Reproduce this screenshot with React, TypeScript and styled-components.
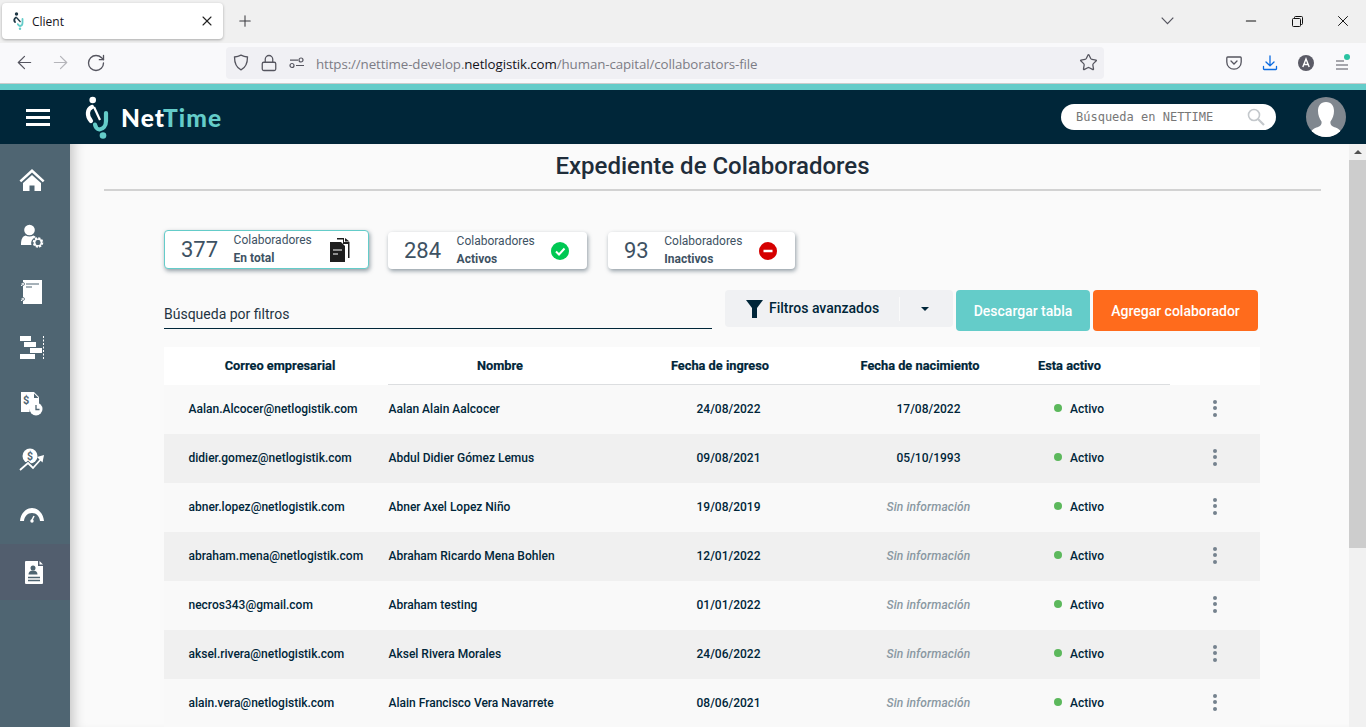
import React from "react";
import styled, { createGlobalStyle } from "styled-components";
import { ArrowLeft, ArrowRight, RotateCw, Lock, Star, X, Plus, Minus } from "lucide-react";

const Global = createGlobalStyle`
  html, body { margin: 0; padding: 0; height: 100%; overflow: hidden; background: #fafafa; }
  * { box-sizing: border-box; }
  body { font-family: "Roboto", "Liberation Sans", sans-serif; color: #002639; }
`;

const Frame = styled.div`
  width: 1366px; height: 727px; display: flex; flex-direction: column; overflow: hidden;
`;
const TabStrip = styled.div`
  height: 43px; background: #f0f0f0; display: flex; align-items: flex-start; padding: 3px 0 0 2px; flex: none; color: #3b3b40;
`;
const Tab = styled.div`
  width: 221px; height: 36px; background: #fff; border-radius: 4px; box-shadow: 0 1px 3px rgba(0,0,0,.3);
  display: flex; align-items: center; padding: 0 8px 0 11px; gap: 7px;
  font: 12px "Open Sans", sans-serif; color: #15141a;
`;
const TabTitle = styled.span` flex: 1; `;
const NewTab = styled.div` margin: 9px 0 0 13px; display: flex; `;
const Spacer = styled.div` flex: 1; `;
const WinControls = styled.div`
  display: flex; align-items: center; height: 36px;
`;
const TabListChevron = styled.div` display: flex; margin-right: 54px; `;
const WinBtn = styled.div`
  width: 46px; display: flex; justify-content: center; color: #111;
`;
const Toolbar = styled.div`
  height: 41px; background: #f9f9fb; border-bottom: 1px solid #ccc; flex: none; display: flex; align-items: center; padding-bottom: 1px; color: #55555f;
`;
const NavGroup = styled.div`
  width: 226px; padding-left: 6px; display: grid; grid-template-columns: repeat(3, 36px); justify-items: center; align-items: center;
`;
const UrlBar = styled.div`
  width: 878px; height: 32px; background: #f0f0f4; border-radius: 4px; display: flex; align-items: center; padding: 0 6px 0 7px;
`;
const UrlIcons = styled.div` display: flex; align-items: center; gap: 11px; margin-right: 11px; `;
const UrlText = styled.div`
  flex: 1; font: 13.33px "Open Sans", sans-serif; letter-spacing: -0.11px; color: #7c7c85; white-space: nowrap; padding-top: 3px;
  b { font-weight: 400; color: #15141a; }
`;
const ToolIcons = styled.div` flex: 1; display: flex; align-items: center; justify-content: flex-end; padding-right: 16px; gap: 20px; `;
const Stripe = styled.div` height: 6px; background: #64ccc9; flex: none; `;
const Header = styled.header`
  height: 54px; background: #002639; flex: none; display: flex; align-items: center; position: relative; z-index: 2;
`;
const Burger = styled.div`
  width: 24px; margin-left: 26px; display: flex; flex-direction: column; gap: 4px;
  i { display: block; height: 3px; background: #fff; }
`;
const Logo = styled.div` display: flex; align-items: center; margin-left: 35px; gap: 6px; `;
const LogoText = styled.div`
  font: 900 24.5px "Lato", sans-serif; letter-spacing: 1.1px; color: #fff; margin-top: 1px;
  span { color: #64ccc9; }
`;
const HeaderSearch = styled.div`
  width: 215px; height: 26px; background: #fff; border-radius: 13px; display: flex; align-items: center; justify-content: space-between; padding: 0 11px 0 15px;
  margin-right: 30px; font: 12px "DejaVu Sans Mono", monospace; color: #777;
`;
const Avatar = styled.div` width: 40px; height: 40px; border-radius: 50%; overflow: hidden; margin-right: 20px; background: #80878f; `;

const Body = styled.div` flex: 1; display: flex; min-height: 0; `;
const Sidebar = styled.nav`
  width: 70px; flex: none; background: #4f6572; padding-top: 8px; display: flex; flex-direction: column;
`;
const NavItem = styled.div<{ $active?: boolean }>`
  height: 56px; display: flex; align-items: center; padding-left: 19px; background: ${p => p.$active ? "#525e6e" : "transparent"};
`;
const Main = styled.main`
  flex: 1; min-width: 0; background: #fafafa; box-shadow: inset 12px 0 12px -8px rgba(0,0,0,.2); overflow: hidden;
`;
const Title = styled.h1`
  margin: 0 28px 0 34px; height: 47px; border-bottom: 2px solid #d2d2d2; text-align: center;
  font: 500 24px/44px "Roboto", sans-serif; color: #1f2d3a;
`;
const Content = styled.div` padding: 39px 0 0 94px; width: 1190px; `;
const Cards = styled.div` display: flex; align-items: flex-end; height: 39px; `;
const Card = styled.div<{ $w: number; $active?: boolean; $ml?: number }>`
  width: ${p => p.$w}px; height: ${p => p.$active ? 39 : 37}px; margin-left: ${p => p.$ml ?? 0}px; background: #fff; border-radius: 4px;
  border: ${p => p.$active ? "1px solid #64ccc9" : "none"};
  box-shadow: 1px 2px 4px rgba(60,80,95,.55);
  display: flex; align-items: center; padding: 0 ${p => p.$active ? 17 : 18}px 0 16px; gap: 15.5px; color: #3e5263;
`;
const CardNum = styled.div` font: 400 22px "Roboto", sans-serif; `;
const CardLabel = styled.div`
  font: 400 12px/18px "Roboto", sans-serif; flex: 1; padding-bottom: 1px;
  b { display: block; font-weight: 700; }
`;
const FilterRow = styled.div` display: flex; align-items: flex-start; margin-top: 21px; `;
const SearchField = styled.div`
  width: 548px; height: 39px; border-bottom: 1px solid #002639; font: 400 14px/16px "Roboto", sans-serif; color: #1f3442; padding-top: 16px; margin-right: 13px;
`;
const FilterBtn = styled.div`
  width: 228px; height: 37px; background: #f0f1f3; border-radius: 4px; display: flex; align-items: center; padding-left: 21px; margin-right: 3px;
  font: 500 14px "Roboto", sans-serif; color: #002639;
`;
const FilterText = styled.span` margin-left: 6px; width: 130px; padding-bottom: 1px; `;
const FilterCaret = styled.div`
  height: 24px; border-left: 1px solid #fafafa; padding-left: 21px; display: flex; align-items: center;
  &::after { content: ""; border: 4px solid transparent; border-top: 4px solid #002639; border-bottom: 0; }
`;
const ActionBtn = styled.div<{ $w: number; $bg: string; $mr?: number }>`
  width: ${p => p.$w}px; height: 41px; background: ${p => p.$bg}; color: #fff; border-radius: 4px; margin-right: ${p => p.$mr ?? 0}px;
  display: flex; align-items: center; justify-content: center; font: 500 14px "Roboto", sans-serif;
`;
const cols = "224px 224px 216px 184px 158px 90px";
const Table = styled.div` margin-top: 16px; width: 1096px; `;
const HeadRow = styled.div`
  display: grid; grid-template-columns: ${cols}; height: 38px; padding-bottom: 2px; background: #fff; position: relative;
  &::after { content: ""; position: absolute; left: 224px; width: 782px; bottom: 0; height: 1px; background: #dcdee0; }
`;
const HeadCell = styled.div<{ $left?: number; $align?: string }>`
  display: flex; align-items: center; justify-content: ${p => p.$align ?? "center"}; padding-left: ${p => p.$left ?? 0}px;
  font: 700 12.8px "Roboto", sans-serif; color: #002639; -webkit-text-stroke: .2px #002639; white-space: nowrap;
`;
const Row = styled.div<{ $alt: boolean }>`
  display: grid; grid-template-columns: ${cols}; height: 49px; padding-bottom: 2px; background: ${p => p.$alt ? "#f0f0f0" : "#f9f9f9"}; align-items: center;
  font: 500 12px "Roboto", sans-serif; color: #002639;
`;
const EmailCell = styled.div` padding-left: 24.5px; white-space: nowrap; `;
const NameCell = styled.div` white-space: nowrap; padding-left: .5px; `;
const DateCell = styled.div` text-align: center; padding-left: 17px; `;
const Empty = styled.div` text-align: center; padding-left: 17px; font-style: italic; color: #8a98a2; letter-spacing: .1px; `;
const Status = styled.div` display: flex; align-items: center; padding-left: 42px; gap: 8px; `;
const Dot = styled.i` width: 8px; height: 8px; border-radius: 50%; background: #5cb85c; margin-top: -2px; `;
const More = styled.div`
  display: flex; flex-direction: column; align-items: center; gap: 2.5px; margin-top: -1px;
  i { width: 4px; height: 4px; border-radius: 50%; background: #75828e; }
`;
const ScrollTrack = styled.div`
  width: 17px; flex: none; background: #f1f1f1; display: flex; flex-direction: column; align-items: center; position: relative; z-index: 1;
`;
const ScrollArrow = styled.div`
  height: 16px; display: flex; align-items: center;
  &::after { content: ""; border: 4px solid transparent; border-bottom: 4px solid #505050; border-top: 0; }
`;
const ScrollThumb = styled.div` width: 17px; height: 388px; background: #cdcdcd; `;

const rows = [
  ["Aalan.Alcocer@netlogistik.com", "Aalan Alain Aalcocer", "24/08/2022", "17/08/2022"],
  ["didier.gomez@netlogistik.com", "Abdul Didier Gómez Lemus", "09/08/2021", "05/10/1993"],
  ["abner.lopez@netlogistik.com", "Abner Axel Lopez Niño", "19/08/2019", ""],
  ["abraham.mena@netlogistik.com", "Abraham Ricardo Mena Bohlen", "12/01/2022", ""],
  ["necros343@gmail.com", "Abraham testing", "01/01/2022", ""],
  ["aksel.rivera@netlogistik.com", "Aksel Rivera Morales", "24/06/2022", ""],
  ["alain.vera@netlogistik.com", "Alain Francisco Vera Navarrete", "08/06/2021", ""],
];

const Favicon = () => (
  <svg width="12" height="18" viewBox="0 0 12 18" fill="none">
    <circle cx="3.500" cy="2" r="1.700" fill="#1d3644" />
    <path d="M3 5.500C1 6.500.8 8.500 2 10" stroke="#1d3644" strokeWidth="1.900" strokeLinecap="round" />
    <path d="M3.500 5.500L7.500 10" stroke="#1d3644" strokeWidth="1.200" />
    <path d="M9.500 7v4c0 1.800-1 2.800-2.500 3-1-.2-1.800-.8-2.200-1.800" stroke="#64ccc9" strokeWidth="1.800" strokeLinecap="round" />
    <circle cx="7" cy="16.700" r="1.200" fill="#64ccc9" />
  </svg>
);
const Shield = () => (
  <svg width="16" height="17" viewBox="0 0 16 17" fill="none" stroke="#55555f" strokeWidth="1.300"><path d="M8 1.200c2 1 4 1.600 6.500 1.800 0 5.500-1.500 10.500-6.500 12.800C3 13.500 1.500 8.500 1.500 3 4 2.800 6 2.200 8 1.200z" /></svg>
);
const Perms = () => (
  <svg width="16" height="12" viewBox="0 0 16 12" fill="none" stroke="#55555f" strokeWidth="1.200"><circle cx="12" cy="3" r="2" /><circle cx="3" cy="8.500" r="2" /><path d="M1 3.200h8M7 8.500h8" /></svg>
);
const Pocket = () => (
  <svg width="16" height="16" viewBox="0 0 16 16" fill="none" stroke="#55555f" strokeWidth="1.300"><path d="M1.700 2h12.600c.5 0 .9.400.9.900V7a7.200 7.200 0 0 1-14.400 0V2.900c0-.5.400-.9.900-.9z" /><path d="M5 6l3 3 3-3" strokeLinecap="round" /></svg>
);
const DownloadIco = () => (
  <svg width="16" height="16" viewBox="0 0 16 16" fill="none" stroke="#0b6be0" strokeWidth="1.300" strokeLinecap="round" strokeLinejoin="round"><path d="M8 1v9.500M4 7l4 3.800L12 7M1.500 11.500v2.500a.6.6 0 0 0 .6.500h11.800a.6.6 0 0 0 .6-.500v-2.500" /></svg>
);
const Acct = () => (
  <svg width="16" height="16" viewBox="0 0 16 16"><circle cx="8" cy="8" r="8" fill="#5b5b66" /><path d="M4.800 12L8 4l3.200 8M6 9.500h4" stroke="#fff" strokeWidth="1.400" fill="none" /></svg>
);
const Hamb = () => (
  <svg width="16" height="18" viewBox="0 0 16 18" fill="none"><path d="M2 7h8M2 11h12M2 15h12" stroke="#55555f" strokeWidth="1.200" /><circle cx="13" cy="3" r="3" fill="#2ac3a2" /></svg>
);
const ChevronIco = () => (
  <svg width="13" height="8" viewBox="0 0 13 8" fill="none" stroke="#55555f" strokeWidth="1.200"><path d="M.7.700l5.800 6 5.800-6" /></svg>
);
const RestoreIco = () => (
  <svg width="11" height="11" viewBox="0 0 11 11" fill="none" stroke="#111"><rect x=".5" y="2.500" width="8" height="8" rx="1" /><path d="M2.500 2.500v-1a1 1 0 0 1 1-1h6a1 1 0 0 1 1 1v6a1 1 0 0 1-1 1h-1" /></svg>
);
const LogoMark = () => (
  <svg width="30" height="44" viewBox="0 -1 30 44" fill="none">
    <circle cx="7.700" cy="4" r="3.300" fill="#fff" />
    <path d="M7 11C2 13 1.500 20 6 25" stroke="#fff" strokeWidth="4.200" strokeLinecap="round" />
    <path d="M9 11l6 13" stroke="#fff" strokeWidth="2.200" />
    <path d="M21 17v8c0 5-3 8-6.500 8.500-2-.3-4-2-4.500-5" stroke="#64ccc9" strokeWidth="4.200" strokeLinecap="round" />
    <circle cx="18" cy="39.500" r="3.300" fill="#64ccc9" />
  </svg>
);
const Magnifier = () => (
  <svg width="18" height="18" viewBox="0 0 18 18" fill="none" stroke="#c4c8cc" strokeWidth="1.600"><circle cx="7" cy="7" r="5.500" /><path d="M11 11l6 6" strokeWidth="2.200" /></svg>
);
const AvatarImg = () => (
  <svg width="40" height="40" viewBox="0 0 40 40">
    <path fill="#fff" d="M20 5c5.500 0 8 4 8 9 0 4-1.500 8-3.500 10.500-.3 1.800 0 3.500 2 4.800 2.500 1.500 6 1.700 8 4.700v6H5.500v-6c2-3 5.500-3.200 8-4.700 2-1.300 2.300-3 2-4.800C13.500 22 12 18 12 14c0-5 2.500-9 8-9z" />
  </svg>
);

const IHome = () => (
  <svg width="26" height="24" viewBox="0 0 26 24" fill="#fff"><path d="M13 1L.5 12.500l1.700 1.800L13 4.500l10.800 9.800 1.700-1.800z" /><path d="M13 7L4 15v8h6.500v-5.500h5V23H22v-8z" /></svg>
);
const IUser = () => (
  <svg width="26" height="26" viewBox="0 0 26 26" fill="#fff">
    <circle cx="10.500" cy="7" r="5.300" />
    <path d="M2 22c0-6 1.500-8.500 4.500-9.500 2.500 1.300 5.500 1.300 8 0 1 .4 1.800 1 2.500 1.700-3.500 1-5.500 4-4.500 7.800z" />
    <circle cx="19" cy="19.500" r="4" fill="none" stroke="#fff" strokeWidth="2.600" strokeDasharray="2 1.100" />
    <circle cx="19" cy="19.500" r="3.400" fill="none" stroke="#fff" strokeWidth="1.400" />
  </svg>
);
const INote = () => (
  <svg width="26" height="26" viewBox="0 0 26 26">
    <path fill="#fff" d="M4 1h19v24H4v-3h-2v-3h2V7H2V4h2z" />
    <path stroke="#4f6572" strokeWidth="1.200" d="M7 5h13M7 8h6" />
    <circle cx="4" cy="5" r="1.500" fill="#fff" stroke="#4f6572" strokeWidth=".8" />
    <circle cx="4" cy="20" r="1.500" fill="#fff" stroke="#4f6572" strokeWidth=".8" />
  </svg>
);
const IGantt = () => (
  <svg width="26" height="26" viewBox="0 0 26 26" fill="#fff"><path d="M1 1h11v5H1zM5 7h12v5H5zM11 13h12v5H11zM1 19h15v5H1z" /><path d="M24.500 1v23" stroke="#fff" strokeDasharray="2 1.500" /></svg>
);
const IBill = () => (
  <svg width="26" height="26" viewBox="0 0 26 26">
    <path fill="#fff" d="M2 1h13l5 5v7a8 8 0 0 0-9.500 8H2z" />
    <path fill="#4f6572" d="M15 2.500v4.500h4.500z" />
    <circle cx="17" cy="18" r="6.500" fill="#fff" />
    <path d="M17 14v4.500h3.500" stroke="#4f6572" strokeWidth="1.300" fill="none" />
    <text x="4" y="13" fontSize="11" fontWeight="700" fill="#4f6572" fontFamily="Roboto, sans-serif">$</text>
  </svg>
);
const IChart = () => (
  <svg width="26" height="24" viewBox="0 0 26 24">
    <circle cx="11" cy="8" r="7.500" fill="#fff" />
    <text x="8" y="12" fontSize="10.500" fontWeight="700" fill="#4f6572" fontFamily="Roboto, sans-serif">$</text>
    <path d="M1 22l8-7 5 5 9-10" stroke="#4f6572" strokeWidth="3.500" fill="none" />
    <path d="M1 22l8-7 5 5 9-10" stroke="#fff" strokeWidth="1.800" fill="none" />
    <path d="M18 9l7-2-1.500 7.500z" fill="#fff" />
  </svg>
);
const IGauge = () => (
  <svg width="26" height="18" viewBox="0 0 26 18">
    <path fill="#fff" d="M1 14C1.500 7 6.500 1 13 1s11.500 6 12 13l-4 0c-.5-4.500-3.500-8-8-8s-7.500 3.500-8 8z" />
    <path d="M13 13l2-4" stroke="#fff" strokeWidth="1.500" />
    <circle cx="13" cy="14" r="1.700" fill="#fff" />
  </svg>
);
const IDoc = () => (
  <svg width="26" height="26" viewBox="0 0 26 26">
    <path fill="#fff" d="M7 2h12v5h5v17a1 1 0 0 1-1 1H7a1 1 0 0 1-1-1V3a1 1 0 0 1 1-1z" />
    <path fill="#fff" d="M20.500 2l3.500 3.500h-3.500z" />
    <circle cx="14" cy="9" r="2.500" fill="#4f6572" />
    <path d="M9.500 15.500c0-2.800 1.800-4 4.500-4s4.500 1.200 4.500 4z" fill="#4f6572" />
    <path d="M9 18.500h12M9 21.500h12" stroke="#4f6572" strokeWidth="1.300" />
  </svg>
);
const Files = () => (
  <svg width="22" height="26" viewBox="0 0 22 26" fill="#1e1e1e">
    <path d="M8 1h7v4h5.500v16H19V7h-5V2.500H8z" />
    <path d="M16 1l4.500 3.500H16z" />
    <path d="M1 5h11l4 4v16H1z" />
    <path d="M4 13h9M4 17h5" stroke="#fff" strokeWidth="1.200" />
  </svg>
);
const Ok = () => (
  <svg width="18" height="18" viewBox="0 0 18 18"><circle cx="9" cy="9" r="9" fill="#00c853" /><path d="M5 9.500l3 3 5.500-6" stroke="#fff" strokeWidth="2" fill="none" /></svg>
);
const No = () => (
  <svg width="18" height="18" viewBox="0 0 18 18"><circle cx="9" cy="9" r="9" fill="#d50000" /><path d="M4.500 9h9" stroke="#fff" strokeWidth="2.500" /></svg>
);
const Funnel = () => (
  <svg width="17" height="18" viewBox="0 0 17 18" fill="#002639"><path d="M0 0h17l-6 8v10H6V8z" /></svg>
);

export default function App() {
  return (
    <Frame>
      <Global />
      <TabStrip>
        <Tab>
          <Favicon />
          <TabTitle>Client</TabTitle>
          <X size={16} strokeWidth={1.6} color="#222" />
        </Tab>
        <NewTab><Plus size={18} strokeWidth={1.4} /></NewTab>
        <Spacer />
        <WinControls>
          <TabListChevron><ChevronIco /></TabListChevron>
          <WinBtn><Minus size={16} strokeWidth={1.6} /></WinBtn>
          <WinBtn><RestoreIco /></WinBtn>
          <WinBtn><X size={18} strokeWidth={1.3} /></WinBtn>
        </WinControls>
      </TabStrip>
      <Toolbar>
        <NavGroup>
          <ArrowLeft size={21} strokeWidth={1.4} />
          <ArrowRight size={21} strokeWidth={1.4} color="#b5b5ba" />
          <RotateCw size={20} strokeWidth={1.6} />
        </NavGroup>
        <UrlBar>
          <UrlIcons>
            <Shield />
            <Lock size={18} strokeWidth={1.7} />
            <Perms />
          </UrlIcons>
          <UrlText>https://nettime-develop.<b>netlogistik.com</b>/human-capital/collaborators-file</UrlText>
          <Star size={19} strokeWidth={1.6} />
        </UrlBar>
        <ToolIcons>
          <Pocket />
          <DownloadIco />
          <Acct />
          <Hamb />
        </ToolIcons>
      </Toolbar>
      <Stripe />
      <Header>
        <Burger><i /><i /><i /></Burger>
        <Logo>
          <LogoMark />
          <LogoText>Net<span>Time</span></LogoText>
        </Logo>
        <Spacer />
        <HeaderSearch>Búsqueda en NETTIME<Magnifier /></HeaderSearch>
        <Avatar><AvatarImg /></Avatar>
      </Header>
      <Body>
        <Sidebar>
          <NavItem><IHome /></NavItem>
          <NavItem><IUser /></NavItem>
          <NavItem><INote /></NavItem>
          <NavItem><IGantt /></NavItem>
          <NavItem><IBill /></NavItem>
          <NavItem><IChart /></NavItem>
          <NavItem><IGauge /></NavItem>
          <NavItem $active><IDoc /></NavItem>
        </Sidebar>
        <Main>
          <Title>Expediente de Colaboradores</Title>
          <Content>
            <Cards>
              <Card $w={205} $active>
                <CardNum>377</CardNum>
                <CardLabel>Colaboradores<b>En total</b></CardLabel>
                <Files />
              </Card>
              <Card $w={199} $ml={19}>
                <CardNum>284</CardNum>
                <CardLabel>Colaboradores<b>Activos</b></CardLabel>
                <Ok />
              </Card>
              <Card $w={187} $ml={21}>
                <CardNum>93</CardNum>
                <CardLabel>Colaboradores<b>Inactivos</b></CardLabel>
                <No />
              </Card>
            </Cards>
            <FilterRow>
              <SearchField>Búsqueda por filtros</SearchField>
              <FilterBtn>
                <Funnel />
                <FilterText>Filtros avanzados</FilterText>
                <FilterCaret />
              </FilterBtn>
              <ActionBtn $w={134} $bg="#64ccc9" $mr={3}>Descargar tabla</ActionBtn>
              <ActionBtn $w={165} $bg="#ff6b1c">Agregar colaborador</ActionBtn>
            </FilterRow>
            <Table>
              <HeadRow>
                <HeadCell $left={8}>Correo empresarial</HeadCell>
                <HeadCell>Nombre</HeadCell>
                <HeadCell>Fecha de ingreso</HeadCell>
                <HeadCell>Fecha de nacimiento</HeadCell>
                <HeadCell $left={26} $align="flex-start">Esta activo</HeadCell>
                <div />
              </HeadRow>
              {rows.map((r, i) => (
                <Row key={r[0]} $alt={i % 2 === 1}>
                  <EmailCell>{r[0]}</EmailCell>
                  <NameCell>{r[1]}</NameCell>
                  <DateCell>{r[2]}</DateCell>
                  {r[3] ? <DateCell>{r[3]}</DateCell> : <Empty>Sin información</Empty>}
                  <Status><Dot />Activo</Status>
                  <More><i /><i /><i /></More>
                </Row>
              ))}
            </Table>
          </Content>
        </Main>
        <ScrollTrack>
          <ScrollArrow />
          <ScrollThumb />
        </ScrollTrack>
      </Body>
    </Frame>
  );
}
